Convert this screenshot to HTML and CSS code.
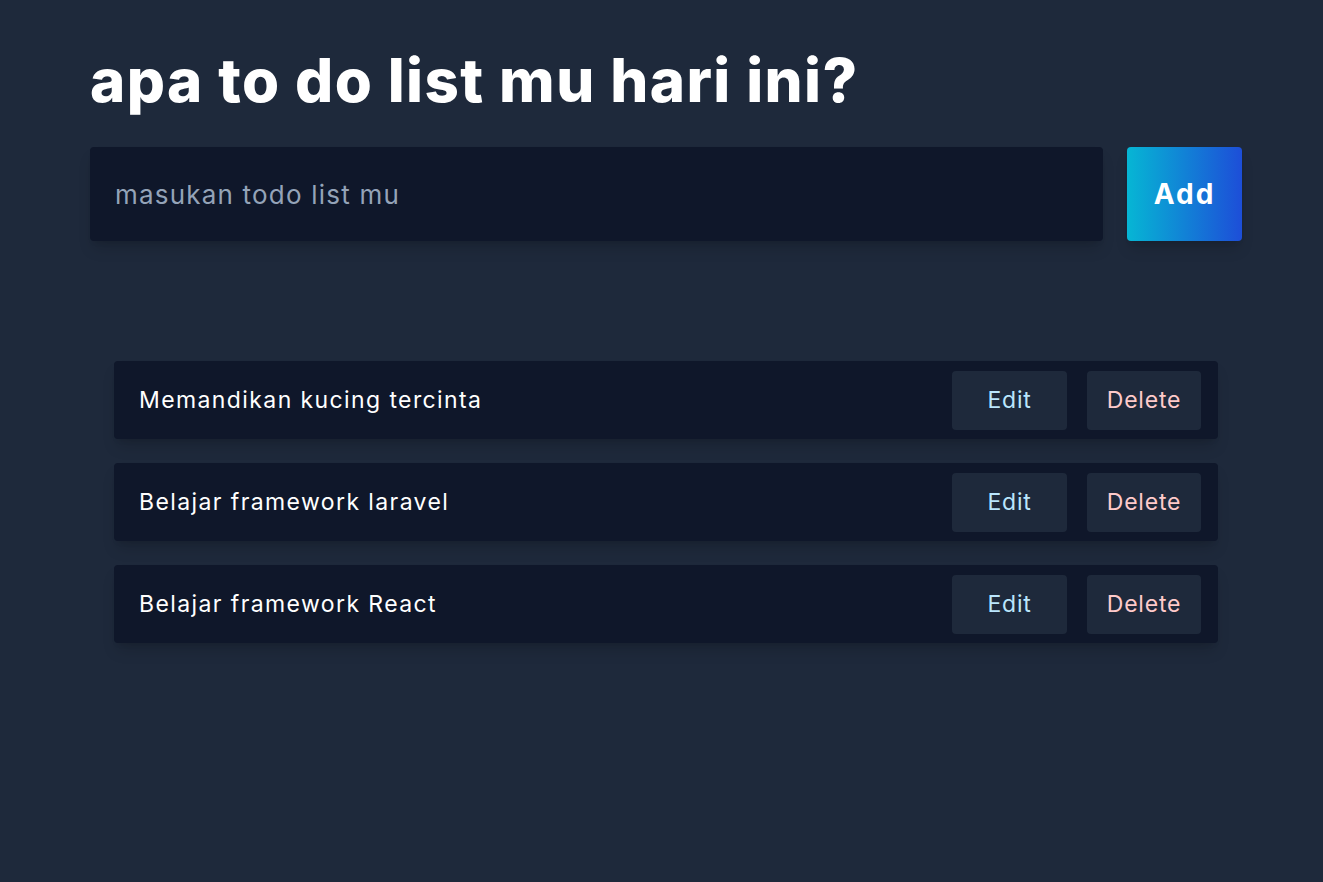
FILE: index.html
```html
<!DOCTYPE html>
<html lang="id">
<head>
<meta charset="utf-8">
<title>Todo List</title>
<link rel="stylesheet" href="styles.css">
</head>
<body>
<main class="page">
  <h1 class="title">apa to do list mu hari ini?</h1>
  <form class="add-form">
    <input class="add-input" type="text" placeholder="masukan todo list mu">
    <button class="add-btn" type="button">Add</button>
  </form>
  <ul class="todo-list">
    <li class="todo-item">
      <span class="todo-text">Memandikan kucing tercinta</span>
      <div class="todo-actions">
        <button class="btn btn-edit" type="button">Edit</button>
        <button class="btn btn-delete" type="button">Delete</button>
      </div>
    </li>
    <li class="todo-item">
      <span class="todo-text">Belajar framework laravel</span>
      <div class="todo-actions">
        <button class="btn btn-edit" type="button">Edit</button>
        <button class="btn btn-delete" type="button">Delete</button>
      </div>
    </li>
    <li class="todo-item">
      <span class="todo-text">Belajar framework React</span>
      <div class="todo-actions">
        <button class="btn btn-edit" type="button">Edit</button>
        <button class="btn btn-delete" type="button">Delete</button>
      </div>
    </li>
  </ul>
</main>
</body>
</html>
```
FILE: styles.css
```css
* { box-sizing: border-box; }
html, body {
  margin: 0;
  height: 100%;
  background: #1e293b;
}
body {
  font-family: "Inter", "Noto Sans", sans-serif;
  color: #ffffff;
}
.page {
  padding: 40px 81px 0 90px;
}
.title {
  margin: 0;
  font-size: 60px;
  line-height: 80px;
  font-weight: 800;
  letter-spacing: 1.4px;
}
.add-form {
  display: flex;
  gap: 24px;
  margin-top: 27px;
}
.add-input {
  flex: 1;
  height: 94px;
  border: none;
  outline: none;
  border-radius: 4px;
  background: #0f172a;
  color: #e2e8f0;
  padding: 0 24px 0 25px;
  font-family: inherit;
  font-size: 26px;
  letter-spacing: 1.2px;
  box-shadow: 0 10px 15px -3px rgba(0,0,0,0.15), 0 4px 6px -4px rgba(0,0,0,0.15);
}
.add-input::placeholder { color: #94a3b8; }
.add-btn {
  width: 115px;
  height: 94px;
  border: none;
  border-radius: 4px;
  background: linear-gradient(to right, #06b6d4, #1d4ed8);
  color: #fff;
  font-family: inherit;
  font-size: 28px;
  font-weight: 700;
  letter-spacing: 2px;
  box-shadow: 0 10px 15px -3px rgba(0,0,0,0.15), 0 4px 6px -4px rgba(0,0,0,0.15);
}
.todo-list {
  list-style: none;
  margin: 120px 24px 0 24px;
  padding: 0;
  display: flex;
  flex-direction: column;
  gap: 24px;
}
.todo-item {
  display: flex;
  align-items: center;
  justify-content: space-between;
  height: 78px;
  padding: 0 17px 0 25px;
  background: #0f172a;
  border-radius: 4px;
  box-shadow: 0 10px 15px -3px rgba(0,0,0,0.15), 0 4px 6px -4px rgba(0,0,0,0.15);
}
.todo-text {
  font-size: 23px;
  letter-spacing: 1.4px;
}
.todo-actions {
  display: flex;
  gap: 20px;
}
.btn {
  height: 59px;
  border: none;
  border-radius: 4px;
  background: #1e293b;
  font-family: inherit;
  font-size: 23px;
  letter-spacing: 0.8px;
}
.btn-edit { width: 115px; color: #bae6fd; }
.btn-delete { width: 114px; color: #fecaca; }
```
